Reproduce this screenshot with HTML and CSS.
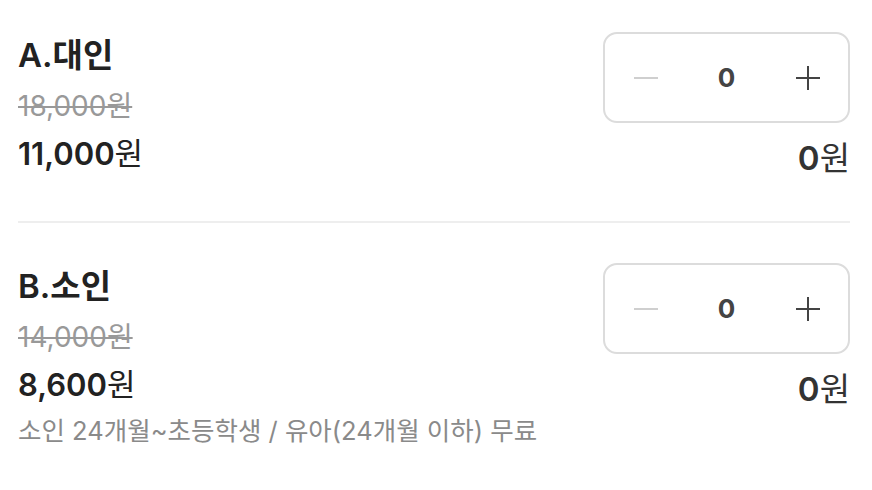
FILE: index.html
```html
<!DOCTYPE html>
<html lang="ko">
<head>
  <meta charset="UTF-8">
  <title>티켓 선택</title>
  <meta name="viewport" content="width=device-width, initial-scale=1.0">
  <link rel="stylesheet" href="styles.css">
</head>
<body>
  <div class="ticket-list">
    <div class="ticket">
      <div class="ticket-info">
        <div class="ticket-name">A.대인</div>
        <div class="ticket-orig">18,000원</div>
        <div class="ticket-price"><b>11,000</b>원</div>
      </div>
      <div class="ticket-side">
        <div class="stepper">
          <button class="step-btn minus" aria-label="빼기">
            <svg width="24" height="24" viewBox="0 0 24 24"><path d="M0 12H24" stroke="#cfcfcf" stroke-width="2"/></svg>
          </button>
          <span class="step-count">0</span>
          <button class="step-btn plus" aria-label="더하기">
            <svg width="24" height="24" viewBox="0 0 24 24"><path d="M0 12H24M12 0V24" stroke="#444" stroke-width="2"/></svg>
          </button>
        </div>
        <div class="ticket-total"><b>0</b>원</div>
      </div>
    </div>
    <div class="ticket">
      <div class="ticket-info">
        <div class="ticket-name">B.소인</div>
        <div class="ticket-orig">14,000원</div>
        <div class="ticket-price"><b>8,600</b>원</div>
        <div class="ticket-note">소인 24개월~초등학생 / 유아(24개월 이하) 무료</div>
      </div>
      <div class="ticket-side">
        <div class="stepper">
          <button class="step-btn minus" aria-label="빼기">
            <svg width="24" height="24" viewBox="0 0 24 24"><path d="M0 12H24" stroke="#cfcfcf" stroke-width="2"/></svg>
          </button>
          <span class="step-count">0</span>
          <button class="step-btn plus" aria-label="더하기">
            <svg width="24" height="24" viewBox="0 0 24 24"><path d="M0 12H24M12 0V24" stroke="#444" stroke-width="2"/></svg>
          </button>
        </div>
        <div class="ticket-total"><b>0</b>원</div>
      </div>
    </div>
  </div>
</body>
</html>
```

FILE: styles.css
```css
body { margin: 0; background: #fff; font-family: Inter, "Noto Sans CJK KR", sans-serif; color: #222; }
.ticket-list { padding: 0 22px 0 18px; }
.ticket { display: flex; justify-content: space-between; align-items: flex-start; padding: 40px 0 43px 0; border-top: 2px solid #eee; }
.ticket:first-child { border-top: none; padding-top: 32px; }
.ticket-info { display: flex; flex-direction: column; padding-top: 3px; }
.ticket-name { font-size: 33px; line-height: 40px; font-weight: 600; color: #222; }
.ticket-orig { font-size: 28px; line-height: 36px; margin-top: 13px; color: #999; text-decoration: line-through; text-decoration-thickness: 2px; }
.ticket-price { font-size: 31px; line-height: 40px; margin-top: 10px; color: #222; }
.ticket-price b { font-weight: 600; }
.ticket-note { font-size: 25.5px; line-height: 36px; margin-top: 8px; color: #8a8a8a; }
.ticket-side { display: flex; flex-direction: column; align-items: flex-end; }
.stepper { width: 247px; height: 91px; box-sizing: border-box; border: 2px solid #dcdcdc; border-radius: 14px; display: grid; grid-template-columns: 1fr 1fr 1fr; align-items: center; }
.step-btn { background: none; border: none; padding: 0; height: 100%; display: flex; align-items: center; justify-content: center; cursor: pointer; }
.step-count { text-align: center; font-size: 26px; font-weight: 700; color: #444; }
.ticket-total { font-size: 33px; line-height: 40px; margin-top: 15px; color: #333; }
.ticket-total b { font-weight: 600; }
```
